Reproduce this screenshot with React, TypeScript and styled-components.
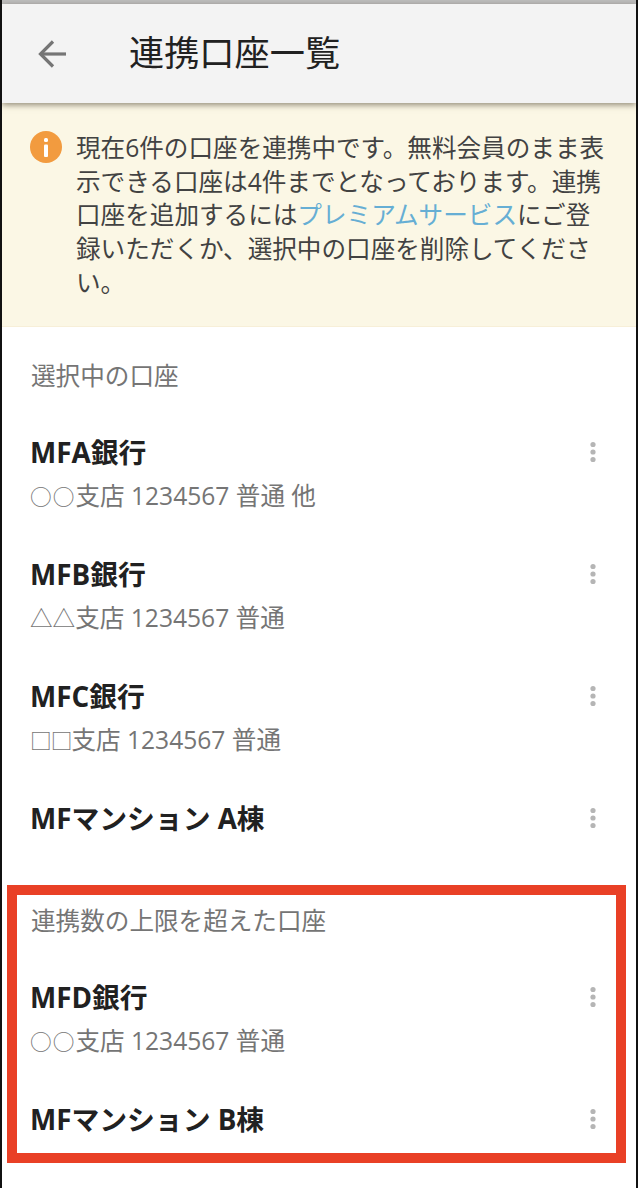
import React from "react";
import styled, { createGlobalStyle } from "styled-components";

const Global = createGlobalStyle`
  html, body { margin: 0; padding: 0; background: #fff; }
  body { font-family: "Open Sans", "Noto Sans CJK JP", sans-serif; }
`;

const Phone = styled.div`
  width: 638px;
  height: 1188px;
  box-sizing: border-box;
  border-left: 2px solid #111;
  border-right: 2px solid #111;
  overflow: hidden;
  background: #fff;
  display: flex;
  flex-direction: column;
`;

const StatusStrip = styled.div`
  height: 4px;
  background: #bdbdbd;
  flex: none;
`;

const Header = styled.header`
  height: 99px;
  flex: none;
  background: #f3f3f3;
  display: flex;
  align-items: center;
  position: relative;
  z-index: 1;
  box-shadow: 0 2px 6px rgba(60, 50, 30, 0.55);
`;

const BackButton = styled.span`
  width: 127px;
  display: flex;
  padding-left: 33px;
  box-sizing: border-box;
  color: #757575;
`;

const Title = styled.h1`
  margin: 0 0 4px;
  font-size: 35.2px;
  line-height: 44px;
  font-weight: 400;
  color: #212121;
`;

const Notice = styled.section`
  flex: none;
  height: 224px;
  box-sizing: border-box;
  background: #fbf7e5;
  border-bottom: 1px solid #f7efd8;
  padding: 28px 27px 0 28px;
  display: flex;
  gap: 14px;
`;

const NoticeIcon = styled.span`
  flex: none;
  width: 32px;
  height: 32px;
  border-radius: 50%;
  background: #f29b3f;
  display: flex;
  justify-content: center;
  align-items: center;
`;

const NoticeText = styled.p`
  margin: 0;
  font-size: 24.6px;
  line-height: 33.7px;
  color: #424242;
`;

const NoticeLink = styled.a`
  color: #66aed4;
`;

const Section = styled.section<{ $top: number }>`
  position: relative;
  margin-top: ${(p) => p.$top}px;
`;

const SectionLabel = styled.div`
  height: 34px;
  line-height: 34px;
  padding: 0 28px 0 29px;
  margin-bottom: 20px;
  font-size: 24.6px;
  color: #757575;
`;

const Row = styled.div`
  display: flex;
  justify-content: space-between;
  padding: 22px 26px 22px 28px;
`;

const RowBody = styled.div`
  display: flex;
  flex-direction: column;
  gap: 10px;
`;

const RowTitle = styled.div`
  height: 34px;
  line-height: 34px;
  font-size: 27.8px;
  font-weight: 700;
  color: #212121;
`;

const RowSub = styled.div`
  height: 34px;
  line-height: 34px;
  font-size: 24.6px;
  color: #757575;
`;

const BranchMark = styled.span<{ $size: number; $spacing: number }>`
  font-size: ${(p) => p.$size}px;
  letter-spacing: ${(p) => p.$spacing}px;
`;

const MoreButton = styled.span`
  width: 34px;
  height: 34px;
  display: flex;
  justify-content: center;
  align-items: center;
  color: #b5b5b5;
`;

const Highlight = styled.div`
  position: absolute;
  left: 5px;
  right: 10px;
  top: -19px;
  bottom: -5px;
  border: 10px solid #e94026;
  pointer-events: none;
`;

const Back = () => (
  <svg width="38" height="38" viewBox="0 0 38 38" fill="none" stroke="currentColor" strokeWidth="3.2">
    <path d="M31 19H6" />
    <path d="M18 6.5 5.5 19 18 31.5" />
  </svg>
);

const Info = () => (
  <svg width="6" height="19" viewBox="0 0 6 19" fill="#fff">
    <rect x="1" y="0" width="4" height="4" rx="1.5" />
    <rect x="1" y="6.5" width="4" height="12.5" rx="1" />
  </svg>
);

const Dots = () => (
  <svg width="8" height="22" viewBox="0 0 8 22" fill="currentColor">
    <circle cx="4" cy="3.5" r="2.6" />
    <circle cx="4" cy="11" r="2.6" />
    <circle cx="4" cy="18.5" r="2.6" />
  </svg>
);

type Mark = { text: string; size: number; spacing: number };

const circle: Mark = { text: "○○", size: 21.7, spacing: 1 };
const triangle: Mark = { text: "△△", size: 22.6, spacing: 0 };
const square: Mark = { text: "□□", size: 21.7, spacing: -1 };

const Account = ({ name, mark, detail }: { name: string; mark?: Mark; detail?: string }) => (
  <Row>
    <RowBody>
      <RowTitle>{name}</RowTitle>
      {detail && (
        <RowSub>
          {mark && (
            <BranchMark $size={mark.size} $spacing={mark.spacing}>
              {mark.text}
            </BranchMark>
          )}
          {detail}
        </RowSub>
      )}
    </RowBody>
    <MoreButton>
      <Dots />
    </MoreButton>
  </Row>
);

export default function App() {
  return (
    <Phone>
      <Global />
      <StatusStrip />
      <Header>
        <BackButton>
          <Back />
        </BackButton>
        <Title>連携口座一覧</Title>
      </Header>
      <Notice>
        <NoticeIcon>
          <Info />
        </NoticeIcon>
        <NoticeText>
          現在6件の口座を連携中です。無料会員のまま表示できる口座は4件までとなっております。連携口座を追加するには
          <NoticeLink>プレミアムサービス</NoticeLink>
          にご登録いただくか、選択中の口座を削除してください。
        </NoticeText>
      </Notice>
      <Section $top={32}>
        <SectionLabel>選択中の口座</SectionLabel>
        <Account name="MFA銀行" mark={circle} detail="支店 1234567 普通 他" />
        <Account name="MFB銀行" mark={triangle} detail="支店 1234567 普通" />
        <Account name="MFC銀行" mark={square} detail="支店 1234567 普通" />
        <Account name="MFマンション A棟" />
      </Section>
      <Section $top={47}>
        <SectionLabel>連携数の上限を超えた口座</SectionLabel>
        <Account name="MFD銀行" mark={circle} detail="支店 1234567 普通" />
        <Account name="MFマンション B棟" />
        <Highlight />
      </Section>
    </Phone>
  );
}
